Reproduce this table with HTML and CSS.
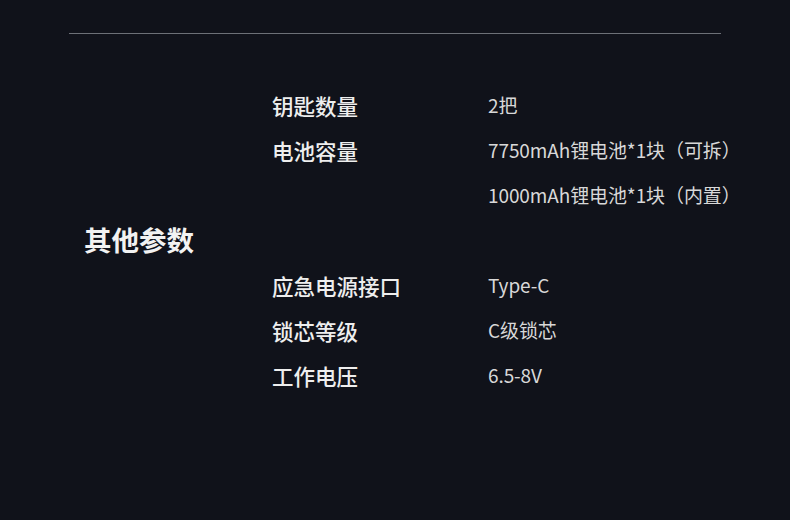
FILE: index.html
```html
<!DOCTYPE html>
<html lang="zh-CN">
<head>
<meta charset="utf-8">
<link rel="stylesheet" href="styles.css">
</head>
<body>
<div class="page">
  <hr class="rule">
  <section class="spec">
    <h2 class="spec-title">其他参数</h2>
    <div class="spec-rows">
      <div class="label">钥匙数量</div><div class="value">2把</div>
      <div class="label">电池容量</div><div class="value">7750mAh锂电池*1块（可拆）</div>
      <div class="label"></div><div class="value">1000mAh锂电池*1块（内置）</div>
      <div class="label"></div><div class="value"></div>
      <div class="label">应急电源接口</div><div class="value">Type-C</div>
      <div class="label">锁芯等级</div><div class="value">C级锁芯</div>
      <div class="label">工作电压</div><div class="value">6.5-8V</div>
    </div>
  </section>
</div>
</body>
</html>
```
FILE: styles.css
```css
html, body {
  margin: 0;
  padding: 0;
  background: #10121a;
  font-family: "Noto Sans CJK SC", "Noto Sans", sans-serif;
}
.page {
  width: 790px;
  height: 520px;
  padding-top: 33px;
  box-sizing: border-box;
}
.rule {
  margin: 0 0 0 69px;
  width: 652px;
  height: 1px;
  border: 0;
  background: #6d7077;
}
.spec {
  display: flex;
  align-items: center;
  margin-top: 49px;
}
.spec-title {
  margin: -2px 0 0 84px;
  width: 188px;
  font-size: 27.5px;
  font-weight: 700;
  color: #f2f2f2;
  line-height: 45px;
}
.spec-rows {
  display: grid;
  grid-template-columns: 216px auto;
  grid-auto-rows: 45px;
  align-items: center;
}
.label {
  font-size: 21.5px;
  font-weight: 500;
  color: #eeeeee;
}
.value {
  font-size: 19px;
  color: #d8d8d8;
  margin-top: -2px;
  letter-spacing: -0.1px;
}
```
